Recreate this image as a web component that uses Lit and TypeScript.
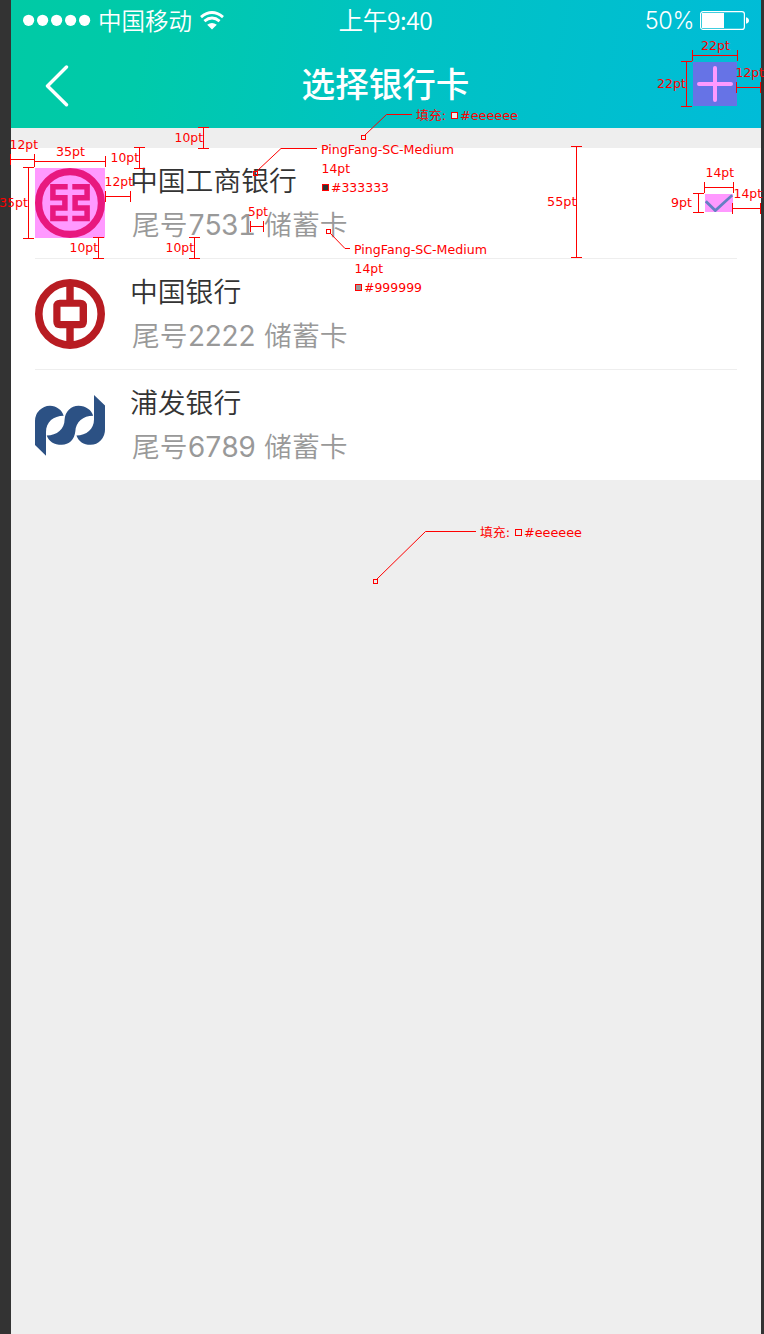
import { LitElement, html, svg, css } from "lit";
import { customElement } from "lit/decorators.js";

const icbc = svg`
  <rect width="70" height="70" fill="#ff99ff"/>
  <circle cx="35" cy="35" r="31.4" fill="none" stroke="#e8187f" stroke-width="7.2"/>
  <g fill="none" stroke="#e8187f" stroke-width="5.5">
    <path d="M32.7 18.8H17.9V29.7H29.9V40H17.9V50.4H32.7"/>
    <path d="M37.3 18.8H52.1V29.7H40.1V40H52.1V50.4H37.3"/>
  </g>`;

const boc = svg`
  <g fill="none" stroke="#b81c22">
    <circle cx="35" cy="35" r="31.2" stroke-width="7.6"/>
    <path d="M35 5V22M35 48V65" stroke-width="7.4"/>
  </g>
  <path fill="#b81c22" fill-rule="evenodd" d="M25 20.7H45.3Q52 20.7 52 27.4V42.6Q52 49.3 45.3 49.3H25Q18.3 49.3 18.3 42.6V27.4Q18.3 20.7 25 20.7ZM25.5 27.8V42H44.6V27.8Z"/>`;

const spd = svg`
  <g fill="#2c5184">
    <path d="M0 31A15.3 15.3 0 0 1 15 15.7C21.5 15.7 27 20 28.7 25.8C18.5 25.8 11 32 11 42V65.7L0 55Z"/>
    <path d="M11.7 45.5C22 45.5 29.6 39 29.6 29.5C30 21.5 36 15.7 43.5 15.7C51 15.7 56.5 20 58.2 25.8C48 25.8 40.8 32 40.3 41.5C39.5 49.5 34 54.8 26.8 54.8C19 54.8 13.8 51.5 11.7 45.5Z"/>
    <path d="M59 5L70 15.5V39.5A15 15 0 0 1 55.5 54.8C48.5 54.8 43.5 51.5 41.4 45.5C51.5 45.5 59 39 59 29.5Z"/>
  </g>`;

const cards = [
  { name: "中国工商银行", tail: "7531", logo: icbc, selected: true },
  { name: "中国银行", tail: "2222", logo: boc, selected: false },
  { name: "浦发银行", tail: "6789", logo: spd, selected: false },
];

/* [x, baseline, width, text] */
const labels: [number, number, number, string][] = [
  [701, 50, 29, "22pt"], [657, 88, 29, "22pt"], [735.5, 77, 28.5, "12pt"],
  [416, 120, 30, "填充:"], [460, 120, 58, "#eeeeee"],
  [174.5, 142, 28.5, "10pt"], [9.5, 149, 28.5, "12pt"], [56, 156, 29, "35pt"],
  [110.5, 162, 28.5, "10pt"], [104.5, 186, 28.5, "12pt"], [-1, 207, 29, "35pt"],
  [69.5, 252, 28.5, "10pt"], [165.5, 252, 28.5, "10pt"], [248, 216, 20, "5pt"],
  [547, 206, 29.5, "55pt"], [705.5, 177, 28.5, "14pt"], [733.5, 198, 28.5, "14pt"],
  [671, 207, 21, "9pt"], [321, 154, 133, "PingFang-SC-Medium"],
  [321.5, 173, 28.5, "14pt"], [331, 192, 58, "#333333"],
  [354, 254, 133, "PingFang-SC-Medium"], [354.5, 273, 28.5, "14pt"],
  [364, 292, 58, "#999999"], [480, 537, 30, "填充:"], [524, 537, 58, "#eeeeee"],
];

/* horizontal dimension lines: [y, x1, x2] */
const spansX = [
  [55, 692, 737], [87, 736, 760], [159, 10, 34], [161, 34, 105],
  [196, 105, 130], [226, 250, 263], [187, 704, 733], [208, 732, 760],
];
/* vertical dimension lines: [x, y1, y2] */
const spansY = [
  [686, 61, 106], [28, 167, 238], [139, 147, 168], [98, 237, 258],
  [194, 237, 258], [203, 127, 148], [576, 146, 257], [698, 193, 212],
];
const leaders = [
  "M365 135L386.5 114.5H412", "M257 171L281 148.5H317",
  "M330 233L345 248.5H350", "M377 579L425.5 531.5H476",
];
/* [x, y, size, fill] */
const swatches: [number, number, number, string][] = [
  [361, 135, 4, "#eee"], [253, 171, 4, "none"], [326, 229, 4, "#fff"], [373, 579, 4, "#eee"],
  [451, 112, 6, "#eee"], [322, 184, 6, "#333"], [355, 284, 6, "#999"], [515, 529, 6, "#eee"],
];

@customElement("spec-overlay")
class SpecOverlay extends LitElement {
  static styles = css`
    :host { display: block; }
    svg { display: block; }
    text { font: 13px "DejaVu Sans", "Noto Sans CJK SC", sans-serif; fill: #f00; }
    .cjk { font-size: 12px; }
    .rule { fill: none; stroke: #f00; shape-rendering: crispEdges; }
    .leader { fill: none; stroke: #f00; }
  `;
  render() {
    return html`<svg width="764" height="1334" viewBox="0 0 764 1334">
      ${spansX.map(([y, a, b]) => svg`<path class="rule" d="M${a} ${y + 0.5}H${b + 1}M${a + 0.5} ${y - 5}V${y + 6}M${b + 0.5} ${y - 5}V${y + 6}"/>`)}
      ${spansY.map(([x, a, b]) => svg`<path class="rule" d="M${x + 0.5} ${a}V${b + 1}M${x - 5} ${a + 0.5}H${x + 6}M${x - 5} ${b + 0.5}H${x + 6}"/>`)}
      ${leaders.map((d) => svg`<path class="leader" d=${d}/>`)}
      ${swatches.map(([x, y, s, f]) => svg`<rect class="rule" x=${x + 0.5} y=${y + 0.5} width=${s} height=${s} style="fill:${f}"/>`)}
      ${labels.map(([x, y, w, s]) => svg`<text class=${s[0] === "填" ? "cjk" : ""} x=${x} y=${y} textLength=${w} lengthAdjust="spacingAndGlyphs">${s}</text>`)}
    </svg>`;
  }
}

@customElement("bank-row")
class BankRow extends LitElement {
  static properties = { card: { attribute: false } };
  declare card: (typeof cards)[number];
  static styles = css`
    :host { display: block; padding-left: 24px; background: #fff; }
    .row { display: flex; align-items: center; height: 110px; margin-right: 24px; padding-right: 4px; border-bottom: 1px solid #eee; box-sizing: content-box; }
    :host(:last-of-type) .row { border-bottom: 0; }
    .logo { width: 70px; height: 70px; flex: none; overflow: visible; }
    .info { flex: 1; margin: -4px 0 0 25px; display: flex; flex-direction: column; gap: 4px; }
    .name { font-size: 27.8px; line-height: 40px; color: #333; }
    .tail { display: flex; padding-left: 2px; font-size: 27.8px; line-height: 40px; color: #999; }
    .digits { width: 76.5px; padding-top: 4px; line-height: 36px; font-family: Inter, "Liberation Sans", sans-serif; font-size: 28px; font-weight: 400; font-variant-numeric: tabular-nums; letter-spacing: -1.4px; }
    .check { flex: none; background: #f9f; }
  `;
  render() {
    const c = this.card;
    return html`<div class="row">
      <svg class="logo" viewBox="0 0 70 70">${c.logo}</svg>
      <div class="info">
        <div class="name">${c.name}</div>
        <div class="tail"><span>尾号</span><span class="digits">${c.tail}</span><span>储蓄卡</span></div>
      </div>
      ${c.selected
        ? html`<svg class="check" width="28" height="18" viewBox="0 0 28 18"><path d="M.8 7.3L10.3 16.6L27.2 1.2" fill="none" stroke="#667fc4" stroke-width="2.8"/></svg>`
        : ""}
    </div>`;
  }
}

@customElement("app-root")
class AppRoot extends LitElement {
  static styles = css`
    :host { display: block; position: relative; width: 764px; height: 1334px; overflow: hidden; background: #333; font-family: "Noto Sans CJK SC", sans-serif; font-weight: 350; }
    .phone { width: 750px; height: 1334px; margin-left: 11px; background: #eee; }
    .top { height: 128px; background: linear-gradient(100deg, #00caa5 0%, #00caaa 18%, #00c3c1 48%, #00bcd8 100%); color: #fff; }
    .status { display: grid; grid-template-columns: 1fr auto 1fr; align-items: center; height: 40px; font-size: 23.5px; }
    .left, .right { display: flex; align-items: center; }
    .left { padding-left: 12px; }
    .dots { margin-right: 7px; }
    .carrier { margin-top: -1px; }
    .wifi { margin-left: 8px; }
    .right { justify-content: flex-end; padding-right: 12px; }
    .pct { margin-right: 6px; padding-top: 1px; font-family: Inter, sans-serif; font-size: 23.5px; letter-spacing: -0.4px; }
    .time { margin: -2px 0 0 -1px; font-size: 24.6px; letter-spacing: -0.4px; }
    .nav { display: grid; grid-template-columns: 1fr auto 1fr; align-items: center; height: 88px; padding: 0 24px 0 34px; }
    .back { margin-top: 4px; }
    .title { margin: -2px 0 0 -11px; font-size: 33.6px; font-weight: 500; line-height: 48px; }
    .add { justify-self: end; margin-top: -1px; background: #6673e6; }
    .list { margin-top: 20px; }
    .marks { position: absolute; inset: 0; }
  `;
  render() {
    return html`
      <div class="phone">
        <header class="top">
          <div class="status">
            <div class="left">
              <svg class="dots" width="68" height="12" viewBox="0 0 68 12" fill="#fff">
                ${[5.6, 19.6, 33.6, 47.6, 61.6].map((x) => svg`<circle cx=${x} cy="6.3" r="5.6"/>`)}
              </svg>
              <span class="carrier">中国移动</span>
              <svg class="wifi" width="24" height="19" viewBox="0 0 24 19" fill="none" stroke="#fff" stroke-width="2.9">
                <path d="M1 6.2Q12-3 23 6.2M4.4 10.2Q12 4 19.6 10.2"/>
                <path d="M7.2 13.8Q12 10 16.8 13.8L12 18.5Z" fill="#fff" stroke="none"/>
              </svg>
            </div>
            <div class="time">上午9:40</div>
            <div class="right">
              <span class="pct">50%</span>
              <svg width="49" height="19" viewBox="0 0 49 19">
                <rect x=".6" y=".6" width="43.8" height="17.8" rx="2.5" fill="none" stroke="#fff" stroke-width="1.2"/>
                <path d="M2 2H24V17H2ZM46 6.2Q49 7 49 9.5T46 12.8Z" fill="#fff"/>
              </svg>
            </div>
          </div>
          <div class="nav">
            <svg class="back" width="24" height="42" viewBox="0 0 24 42" fill="none" stroke="#fff" stroke-width="3.4" stroke-linecap="round" stroke-linejoin="round"><path d="M21.5 2L2.5 21L21.5 39.8"/></svg>
            <div class="title">选择银行卡</div>
            <svg class="add" width="44" height="44" viewBox="0 0 44 44" fill="none" stroke="#f9f" stroke-width="4" stroke-linecap="round"><path d="M22 6V38M6 22H38"/></svg>
          </div>
        </header>
        <main class="list">${cards.map((c) => html`<bank-row .card=${c}></bank-row>`)}</main>
      </div>
      <spec-overlay class="marks"></spec-overlay>
    `;
  }
}
